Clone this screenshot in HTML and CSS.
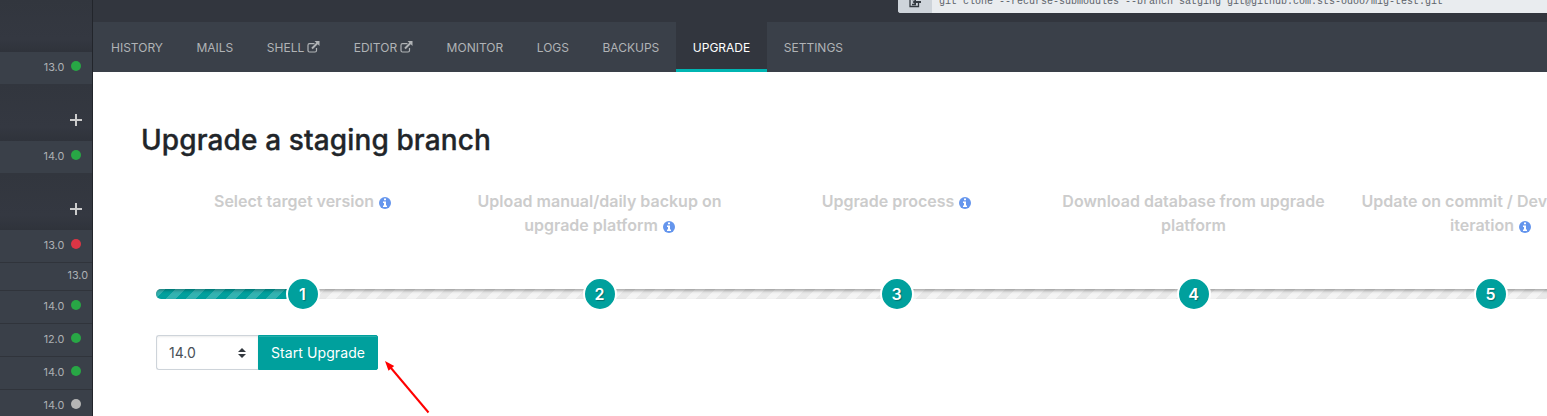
FILE: index.html
```html
<!DOCTYPE html>
<html lang="en">
<head>
<meta charset="utf-8">
<title>Upgrade</title>
<link rel="stylesheet" href="styles.css">
</head>
<body>
<svg class="defs" width="0" height="0">
  <symbol id="info" viewBox="0 0 12 12"><circle cx="6" cy="6" r="6" fill="#6495ed"/><path d="M5 1.500h2v1.800H5zM4 4.500h3v4h1v1.500H4V8.500h1V6H4z" fill="#fff"/></symbol>
  <symbol id="ext" viewBox="0 0 13 12"><path d="M7.500 2.700H2.500Q1 2.700 1 4.200V9.500Q1 11 2.500 11H8Q9.500 11 9.500 9.500V7" fill="none" stroke="currentColor" stroke-width="1.200"/><path d="M5 7.500L10.500 2" stroke="currentColor" stroke-width="2"/><path d="M7.500 0h5v5z" fill="currentColor"/></symbol>
</svg>
<div class="app">
  <aside class="sidebar">
    <div class="gap first"></div>
    <div class="row"><span>13.0</span><i class="dot green"></i></div>
    <div class="gap"><svg class="plus" viewBox="0 0 12 12"><path d="M6 0v12M0 6h12"/></svg></div>
    <div class="row"><span>14.0</span><i class="dot green"></i></div>
    <div class="gap"><svg class="plus" viewBox="0 0 12 12"><path d="M6 0v12M0 6h12"/></svg></div>
    <div class="row"><span>13.0</span><i class="dot red"></i></div>
    <div class="row lined short"><span>13.0</span></div>
    <div class="row lined"><span>14.0</span><i class="dot green"></i></div>
    <div class="row lined"><span>12.0</span><i class="dot green"></i></div>
    <div class="row lined"><span>14.0</span><i class="dot green"></i></div>
    <div class="row lined"><span>14.0</span><i class="dot gray"></i></div>
  </aside>
  <main class="main">
    <header class="top">
      <div class="clone">
        <div class="copy"><svg width="12" height="12" viewBox="0 0 12 12"><path d="M8 1H1v9.500h8.500V7M3 3.500h2M3 8.500h4" fill="none" stroke="#343a40" stroke-width="1.300"/><path d="M3.500 6L7 3v2h5v2H7v2z" fill="#343a40"/></svg></div>
        <code>git clone --recurse-submodules --branch satging git@github.com:sts-odoo/mig-test.git</code>
      </div>
    </header>
    <nav class="tabs">
      <a>HISTORY</a><a>MAILS</a><a>SHELL <svg class="ext"><use href="#ext"/></svg></a><a>EDITOR <svg class="ext"><use href="#ext"/></svg></a><a>MONITOR</a><a>LOGS</a><a>BACKUPS</a><a class="active">UPGRADE</a><a>SETTINGS</a>
    </nav>
    <section class="content">
      <h1>Upgrade a staging branch</h1>
      <div class="steps">
        <div class="step">Select target version <svg class="info"><use href="#info"/></svg></div>
        <div class="step">Upload manual/daily backup on upgrade platform <svg class="info"><use href="#info"/></svg></div>
        <div class="step">Upgrade process <svg class="info"><use href="#info"/></svg></div>
        <div class="step">Download database from upgrade platform</div>
        <div class="step">Update on commit / Development iteration <svg class="info"><use href="#info"/></svg></div>
      </div>
      <div class="track">
        <div class="bar"><div class="fill"></div></div>
        <div class="badges"><div><b>1</b></div><div><b>2</b></div><div><b>3</b></div><div><b>4</b></div><div><b>5</b></div></div>
      </div>
      <div class="form">
        <div class="select"><span>14.0</span><svg width="8" height="10" viewBox="0 0 8 10"><path d="M4 0L8 4H0zM4 10L0 6h8z" fill="#343a40"/></svg></div>
        <button class="start">Start Upgrade</button>
      </div>
    </section>
  </main>
  <svg class="arrow" width="48" height="58" viewBox="0 0 48 58"><path d="M6 7L43.500 51.500" stroke="#f00" stroke-width="2"/><path d="M0 0L9.200 5L3.500 9.800z" fill="#f00"/></svg>
</div>
</body>
</html>
```
FILE: styles.css
```css
* { box-sizing: border-box; }
body { margin: 0; font-family: Inter, sans-serif; background: #fff; overflow: hidden; }
.defs { position: absolute; }
.app { display: flex; height: 416px; overflow: hidden; position: relative; }

.sidebar { width: 93px; flex: none; background: #32363e; border-right: 1px solid #22252b; }
.gap { height: 57px; display: flex; justify-content: flex-end; padding: 30px 10px 0 0; background: linear-gradient(#32363e, #343841 75%, #2f333b); }
.gap.first { height: 52px; }
.plus { width: 12px; height: 12px; }
.plus path { stroke: #ccc; stroke-width: 2; }
.row { height: 32px; background: #3a4049; color: #adb0b4; font-size: 10.8px; display: flex; align-items: center; justify-content: flex-end; gap: 6.5px; padding: 0 10.75px 4px 0; }
.row span { padding-top: 3px; }
.lined { height: 33px; border-top: 1px solid #30343b; }
.row.short { height: 28px; padding: 0 4px 5px 0; }
.dot { width: 10.5px; height: 10.5px; border-radius: 50%; margin-top: -.5px; }
.green { background: #28a745; }
.red { background: #dc3545; }
.gray { background: #b5b5b5; }

.main { flex: 1; min-width: 0; }
.top { height: 22px; background: #32363e; padding-left: 805px; overflow: hidden; }
.clone { display: flex; height: 13px; background: #e9ecef; border-radius: 0 0 0 3px; overflow: hidden; }
.copy { width: 34px; flex: none; background: #ced4da; padding: 0 0 0 11px; }
.copy svg { display: block; margin-top: -4px; }
.clone code { font: 10px/14px "Liberation Mono", monospace; color: #5c636a; margin: -5px 0 0 7px; white-space: nowrap; }
.tabs { height: 50px; display: flex; background: #3a4049; padding-left: 1.25px; }
.tabs a { display: flex; align-items: center; gap: 3px; padding: 3px 16.75px 0; border-bottom: 3px solid transparent; font-size: 12px; color: #b0b3b6; white-space: nowrap; }
.tabs a.active { background: #32363e; border-color: #00b5b2; color: #fff; }
.ext { width: 13px; height: 12px; }

.content { padding: 51px 0 0 48px; width: 1600px; }
h1 { margin: 0; font-size: 28px; line-height: 34px; font-weight: 500; letter-spacing: .12px; -webkit-text-stroke: .35px #212529; color: #212529; }
.steps { display: flex; margin: 32px 0 0 13px; height: 88px; }
.step { width: 297px; padding: 0 15px; text-align: center; color: #ccc; font-size: 16px; line-height: 24px; font-weight: 600; }
.info { width: 12px; height: 12px; vertical-align: -2px; margin-left: 1px; }
.track { display: grid; margin-left: 15px; width: 1485px; }
.track > * { grid-area: 1 / 1; }
.bar { height: 10px; border-radius: 5px; align-self: center; overflow: hidden; background: linear-gradient(135deg, #f4f4f4 25%, #e9e9e9 25%, #e9e9e9 50%, #f4f4f4 50%, #f4f4f4 75%, #e9e9e9 75%) 0 0 / 20px 20px; box-shadow: inset 0 2px 3px rgba(0,0,0,.3); }
.fill { width: 148px; height: 10px; background: linear-gradient(135deg, #33b3b1 25%, #00a09d 25%, #00a09d 50%, #33b3b1 50%, #33b3b1 75%, #00a09d 75%) 0 0 / 20px 20px; box-shadow: inset 0 2px 3px rgba(0,0,0,.25); }
.badges { display: flex; margin-left: -2px; }
.badges div { width: 297px; display: flex; justify-content: center; }
.badges b { width: 34px; height: 34px; border: 2px solid #fff; border-radius: 50%; background: #00a09d; color: #fff; font-size: 16px; font-weight: 600; line-height: 30px; text-align: center; text-shadow: 1px 1px 1px rgba(0,0,0,.3); }
.form { display: flex; margin: 24px 0 0 15px; height: 35px; font-size: 14px; }
.select { width: 102px; border: 1px solid #ced4da; border-right: 0; border-radius: 3px 0 0 3px; display: flex; align-items: center; justify-content: space-between; padding: 0 12px; color: #495057; box-shadow: inset 0 1px 2px rgba(0,0,0,.08); }
.start { width: 120px; border: 1px solid #00a09d; border-radius: 0 2px 2px 0; padding: 0; background: #00a09d; color: #fff; font: 14px Inter, sans-serif; letter-spacing: .1px; box-shadow: inset 0 1px 0 rgba(255,255,255,.15); }
.arrow { position: absolute; left: 385px; top: 361px; }
```
